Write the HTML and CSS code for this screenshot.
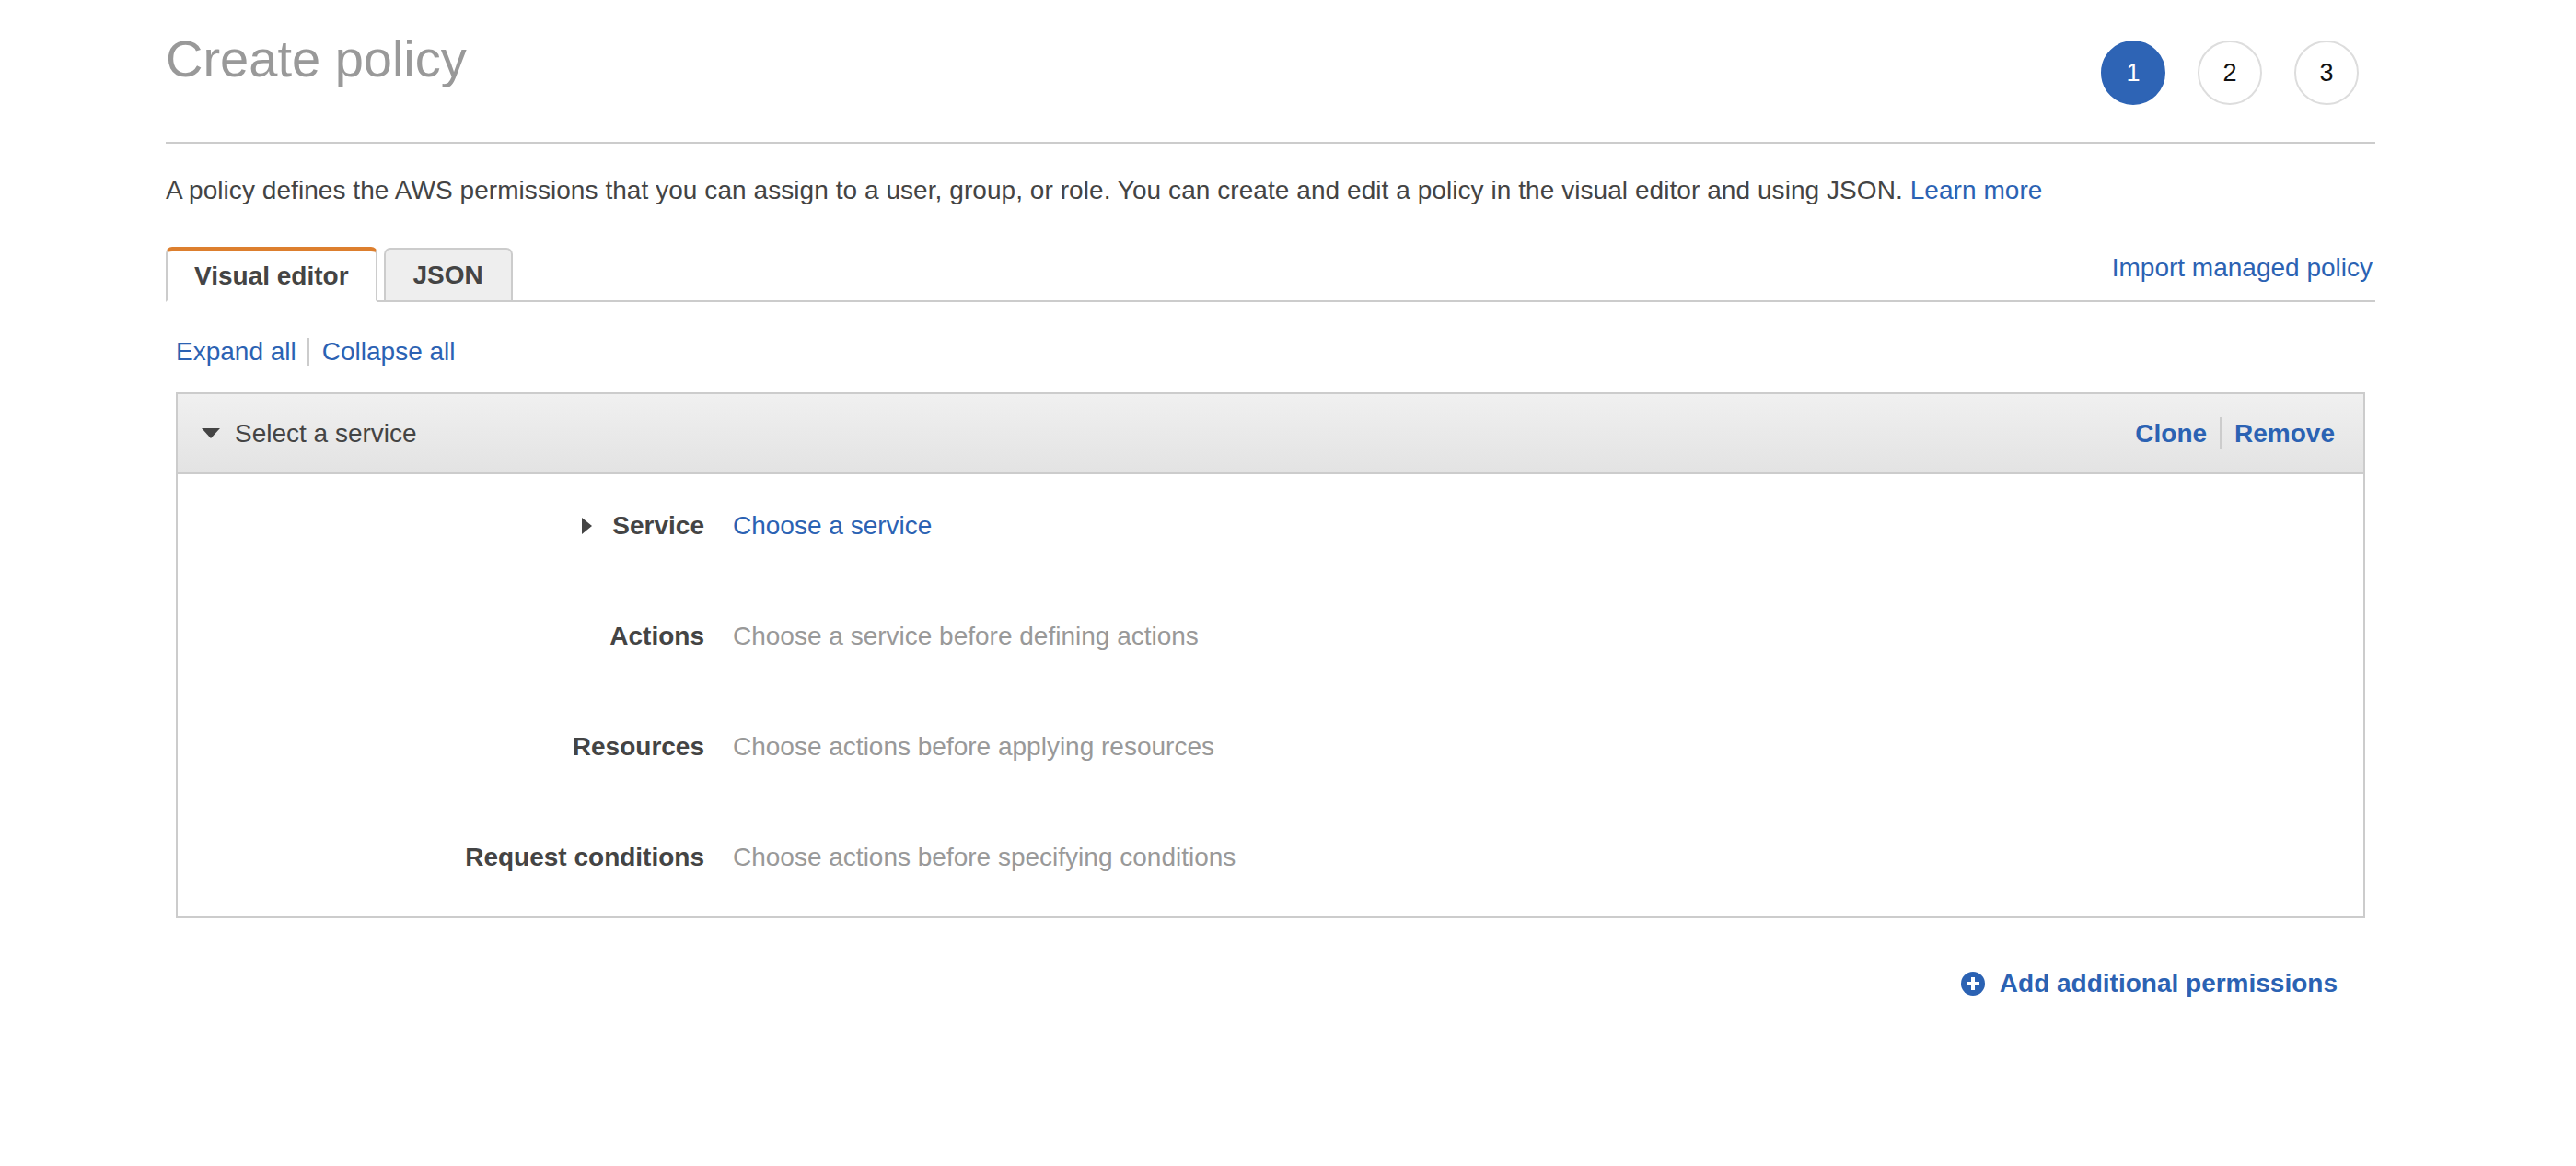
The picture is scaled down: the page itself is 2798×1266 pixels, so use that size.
FILE: index.html
```html
<!DOCTYPE html>
<html>
<head>
<meta charset="utf-8">
<link rel="stylesheet" href="styles.css">
</head>
<body>
<div class="page">
  <div class="header">
    <h1 class="title">Create policy</h1>
    <div class="steps">
      <span class="step active">1</span>
      <span class="step">2</span>
      <span class="step">3</span>
    </div>
  </div>
  <p class="intro">A policy defines the AWS permissions that you can assign to a user, group, or role. You can create and edit a policy in the visual editor and using JSON. <a class="link">Learn more</a></p>
  <div class="tabrow">
    <div class="tabs">
      <div class="tab active">Visual editor</div>
      <div class="tab">JSON</div>
    </div>
    <a class="link import">Import managed policy</a>
  </div>
  <div class="inner">
    <div class="expand">
      <a class="link">Expand all</a>
      <a class="link collapse">Collapse all</a>
    </div>
    <div class="panel">
      <div class="panel-head">
        <div class="head-left">
          <svg class="tri-down" width="20" height="11" viewBox="0 0 20 11"><polygon points="0,0 20,0 10,11" fill="#444"/></svg>
          <span>Select a service</span>
        </div>
        <div class="head-right">
          <a class="link bold">Clone</a>
          <span class="vsep"></span>
          <a class="link bold">Remove</a>
        </div>
      </div>
      <div class="panel-body">
        <div class="label"><svg class="tri-right" width="11" height="18" viewBox="0 0 11 18"><polygon points="0,0 11,9 0,18" fill="#444"/></svg>Service</div>
        <div class="value"><a class="link">Choose a service</a></div>
        <div class="label">Actions</div>
        <div class="value muted">Choose a service before defining actions</div>
        <div class="label">Resources</div>
        <div class="value muted">Choose actions before applying resources</div>
        <div class="label">Request conditions</div>
        <div class="value muted">Choose actions before specifying conditions</div>
      </div>
    </div>
    <div class="add-row">
      <a class="link bold add">
        <svg width="26" height="26" viewBox="0 0 26 26"><circle cx="13" cy="13" r="13" fill="#2b62b3"/><rect x="6" y="11" width="14" height="4" fill="#fff"/><rect x="11" y="6" width="4" height="14" fill="#fff"/></svg>
        <span>Add additional permissions</span>
      </a>
    </div>
  </div>
</div>
</body>
</html>
```
FILE: styles.css
```css
html, body {
  margin: 0;
  padding: 0;
  background: #fff;
}
body {
  font-family: "Liberation Sans", Arial, sans-serif;
  font-size: 28px;
  line-height: 40px;
  color: #444;
}
.page {
  margin-left: 180px;
  width: 2400px;
}
.header {
  display: flex;
  justify-content: space-between;
  align-items: flex-start;
  height: 154px;
  border-bottom: 2px solid #ccc;
}
.title {
  margin: 26px 0 0 0;
  font-size: 56px;
  line-height: 76px;
  font-weight: normal;
  color: #999;
}
.steps {
  display: flex;
  gap: 35px;
  margin-top: 44px;
  margin-right: 18px;
}
.step {
  width: 70px;
  height: 70px;
  box-sizing: border-box;
  border: 2px solid #ddd;
  border-radius: 50%;
  display: flex;
  align-items: center;
  justify-content: center;
  font-size: 27px;
  color: #111;
}
.step.active {
  background: #2e64b5;
  border-color: #2e64b5;
  color: #fff;
}
.intro {
  margin: 31px 0 0 0;
  letter-spacing: 0.06px;
}
.link {
  color: #2b62b3;
  text-decoration: none;
}
.bold {
  font-weight: bold;
}
.tabrow {
  margin-top: 41px;
  display: flex;
  justify-content: space-between;
  align-items: flex-end;
  border-bottom: 2px solid #ccc;
}
.tabs {
  display: flex;
  align-items: flex-end;
  gap: 7px;
  margin-bottom: -2px;
}
.tab {
  height: 59px;
  box-sizing: border-box;
  border: 2px solid #ccc;
  border-radius: 7px 7px 0 0;
  background: #eee;
  font-weight: bold;
  display: flex;
  align-items: center;
  padding: 0 30px;
}
.tab.active {
  height: 60px;
  background: #fff;
  border-top: 5px solid #dd7f2e;
  border-bottom: 2px solid #fff;
  padding: 0 29px;
}
.import {
  margin-bottom: 15px;
  margin-right: 3px;
}
.inner {
  margin-left: 11px;
  width: 2378px;
}
.expand {
  margin-top: 34px;
  display: flex;
  align-items: center;
}
.collapse {
  margin-left: 12px;
  padding-left: 14px;
  border-left: 2px solid #ccc;
  line-height: 30px;
}
.panel {
  margin-top: 24px;
  border: 2px solid #ccc;
}
.panel-head {
  height: 85px;
  border-bottom: 2px solid #ccc;
  background: linear-gradient(#f0f0f0, #e3e3e3);
  display: flex;
  justify-content: space-between;
  align-items: center;
  padding: 0 31px 0 26px;
}
.head-left {
  display: flex;
  align-items: center;
  gap: 16px;
}
.head-right {
  display: flex;
  align-items: center;
}
.vsep {
  width: 2px;
  height: 35px;
  background: #ccc;
  margin: 0 14px;
}
.panel-body {
  display: grid;
  grid-template-columns: 572px 1fr;
  column-gap: 31px;
  row-gap: 80px;
  padding: 36px 0 44px 0;
}
.label {
  font-weight: bold;
  text-align: right;
  display: flex;
  justify-content: flex-end;
  align-items: center;
}
.tri-right {
  margin-right: 22px;
}
.muted {
  color: #999;
}
.add-row {
  margin-top: 51px;
  display: flex;
  justify-content: flex-end;
  padding-right: 30px;
}
.add {
  display: flex;
  align-items: center;
  gap: 16px;
}
```
